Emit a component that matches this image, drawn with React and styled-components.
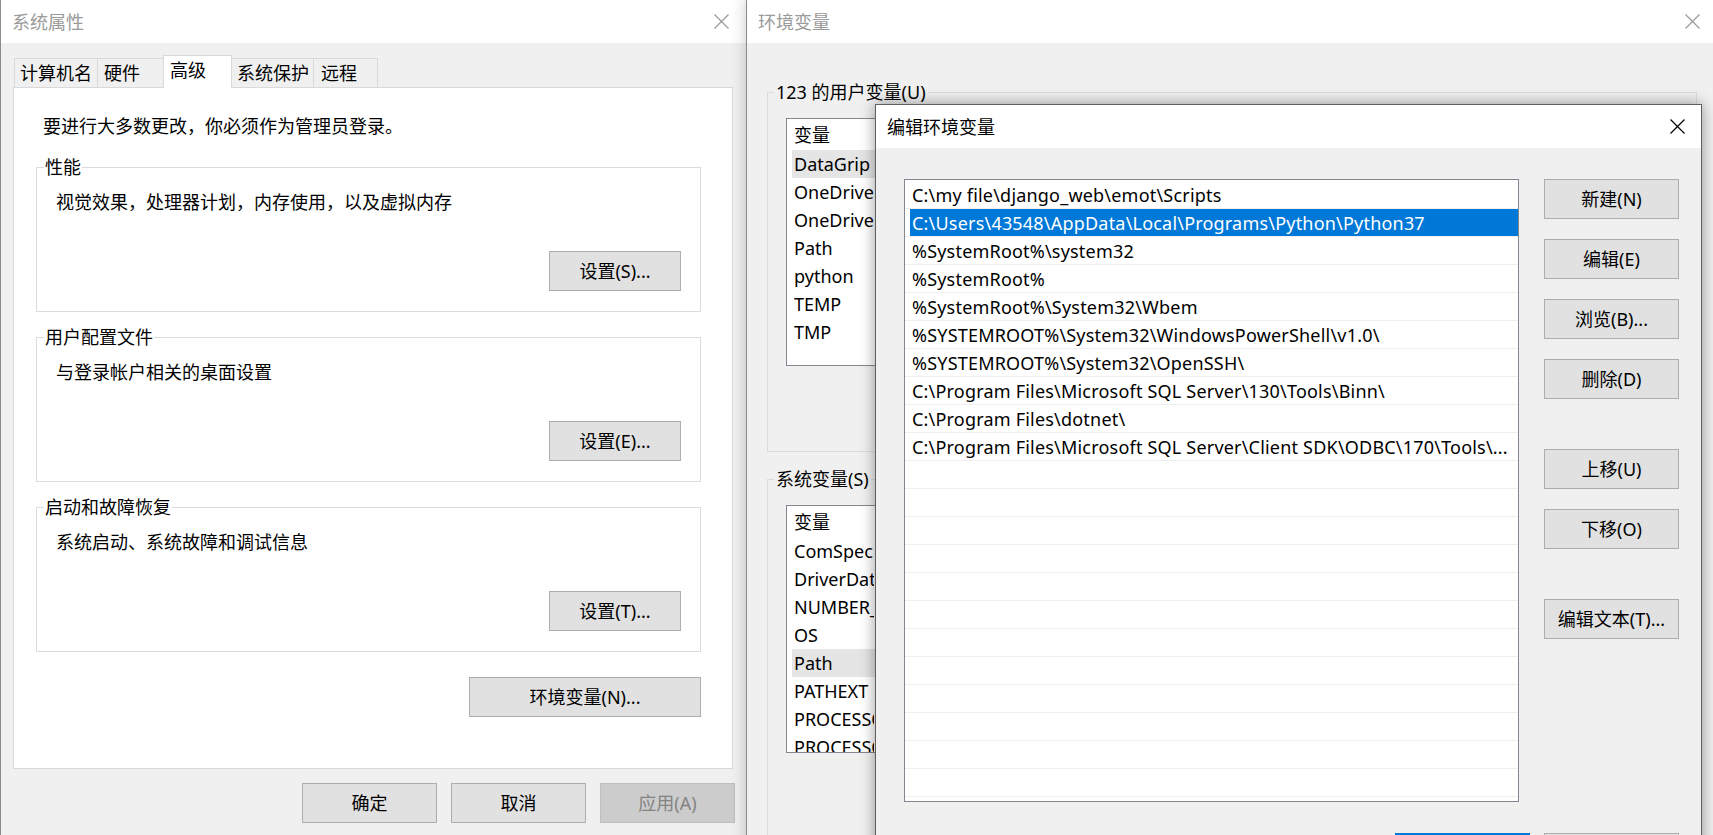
import React from "react";
import styled, { createGlobalStyle } from "styled-components";

const GlobalStyle = createGlobalStyle`
  html, body {
    margin: 0;
    padding: 0;
    background: #f0f0f0;
    overflow: hidden;
  }
  body {
    font-family: "Noto Sans", "Noto Sans CJK SC", sans-serif;
    font-size: 18px;
    line-height: 24px;
    color: #000;
  }
  * { box-sizing: border-box; }
`;

const Desktop = styled.div`
  position: relative;
  width: 1713px;
  height: 835px;
  overflow: hidden;
  background: #f0f0f0;
`;

// windows sit on a free canvas, so they get their place from props
const Window = styled.div`
  position: absolute;
  left: ${(p) => p.$left}px;
  top: ${(p) => p.$top}px;
  width: ${(p) => p.$width}px;
  height: ${(p) => p.$height}px;
  background: #f0f0f0;
  border: 1px solid ${(p) => (p.$active ? "#5f5f5f" : "#8c8c8c")};
  box-shadow: 0 0 14px rgba(0, 0, 0, ${(p) => (p.$active ? 0.4 : 0.22)});
  display: flex;
  flex-direction: column;
`;

const TitleBar = styled.div`
  height: 43px;
  flex-shrink: 0;
  background: #fff;
  display: flex;
  align-items: center;
  justify-content: space-between;
  padding: 0 ${(p) => p.$padRight || 17}px 0 11px;
  color: ${(p) => (p.$active ? "#000" : "#9a9a9a")};
`;

const CloseIcon = ({ color }) => (
  <svg width="15" height="15" viewBox="0 0 15 15">
    <path d="M0.5 0.5 L14.5 14.5 M14.5 0.5 L0.5 14.5" stroke={color} strokeWidth="1.2" fill="none" />
  </svg>
);

/* ---------- 系统属性 ---------- */

const PropsBody = styled.div`
  padding: 12px 13px 0 12px;
  display: flex;
  flex-direction: column;
`;

const TabRow = styled.div`
  height: 32px;
  margin-left: 1px;
  display: flex;
  align-items: flex-end;
`;

const Tab = styled.div`
  width: ${(p) => p.$w}px;
  height: ${(p) => (p.$active ? 33 : 29)}px;
  margin-bottom: ${(p) => (p.$active ? -1 : 0)}px;
  margin-left: ${(p) => (p.$first ? 0 : -1)}px;
  padding-left: ${(p) => p.$pl}px;
  border: 1px solid #d9d9d9;
  border-bottom: none;
  background: ${(p) => (p.$active ? "#fff" : "#f0f0f0")};
  position: relative;
  z-index: ${(p) => (p.$active ? 2 : 1)};
  display: flex;
  align-items: center;
  padding-bottom: ${(p) => (p.$active ? 4 : 0)}px;
`;

const Panel = styled.div`
  height: 682px;
  background: #fff;
  border: 1px solid #d9d9d9;
  padding: 26px 31px 0 22px;
  display: flex;
  flex-direction: column;
`;

const Intro = styled.div`
  padding-left: 7px;
`;

const Group = styled.fieldset`
  margin: ${(p) => p.$mt || 0}px 0 0 0;
  padding: 0 19px 20px 7px;
  border: 1px solid #dcdcdc;
  min-width: 0;
`;

const GroupTitle = styled.legend`
  padding: 0 1px;
  line-height: 24px;
`;

const GroupText = styled.div`
  margin: 11px 0 0 12px;
`;

const ButtonRow = styled.div`
  display: flex;
  justify-content: flex-end;
  gap: ${(p) => p.$gap || 0}px;
  margin-top: ${(p) => p.$mt || 0}px;
  margin-right: ${(p) => p.$mr || 0}px;
`;

const Button = styled.button`
  width: ${(p) => p.$w}px;
  height: 40px;
  flex-shrink: 0;
  margin-top: ${(p) => p.$mt || 0}px;
  padding: 0;
  font-family: inherit;
  font-size: 18px;
  line-height: 24px;
  background: ${(p) => (p.$off ? "#cccccc" : "#e1e1e1")};
  border: 1px solid ${(p) => (p.$primary ? "#0078d7" : p.$off ? "#bfbfbf" : "#adadad")};
  box-shadow: ${(p) => (p.$primary ? "inset 0 0 0 1px #0078d7" : "none")};
  color: ${(p) => (p.$off ? "#838383" : "#000")};
`;

/* ---------- 环境变量 ---------- */

const EnvBody = styled.div`
  padding: 37px 0 0 20px;
  display: flex;
  flex-direction: column;
`;

const EnvGroup = styled(Group)`
  width: 930px;
  height: ${(p) => p.$h}px;
  padding: 0 19px 0 6px;
`;

const EnvGroupTitle = styled(GroupTitle)`
  padding: 0 2px;
`;

const ListView = styled.div`
  height: 248px;
  margin: 14px 0 0 12px;
  border: 1px solid #828790;
  background: #fff;
  overflow: hidden;
`;

const ListHeader = styled.div`
  height: 31px;
  padding-left: 7px;
  display: flex;
  align-items: center;
`;

const ListRow = styled.div`
  height: 28px;
  margin-left: 5px;
  padding-left: 2px;
  display: flex;
  align-items: center;
  background: ${(p) => (p.$selected ? "#e5e5e5" : "transparent")};
`;

const NameCell = styled.div`
  width: 80px;
  white-space: nowrap;
  overflow: hidden;
`;

/* ---------- 编辑环境变量 ---------- */

const DialogBody = styled.div`
  padding: 31px 22px 0 28px;
  display: flex;
  flex-direction: column;
`;

const DialogMain = styled.div`
  display: flex;
  gap: 25px;
`;

const PathList = styled.div`
  width: 615px;
  height: 623px;
  padding-top: 1px;
  border: 1px solid #828790;
  background: #fff;
  overflow: hidden;
`;

const PathRow = styled.div`
  height: 28px;
  border-bottom: 1px solid #efefef;
  display: flex;
`;

const PathCell = styled.div`
  flex: 1;
  margin-left: 5px;
  padding: 0 8px 0 2px;
  display: flex;
  align-items: center;
  white-space: nowrap;
  overflow: hidden;
  letter-spacing: 0.2px;
  background: ${(p) => (p.$selected ? "#0078d7" : "transparent")};
  color: ${(p) => (p.$selected ? "#fff" : "#000")};
`;

const SideButtons = styled.div`
  display: flex;
  flex-direction: column;
`;

const userVars = ["DataGrip", "OneDrive", "OneDriveConsumer", "Path", "python", "TEMP", "TMP"];

const systemVars = [
  "ComSpec",
  "DriverData",
  "NUMBER_OF_PROCESSORS",
  "OS",
  "Path",
  "PATHEXT",
  "PROCESSOR_ARCHITECTURE",
  "PROCESSOR_IDENTIFIER",
];

const pathItems = [
  "C:\\my file\\django_web\\emot\\Scripts",
  "C:\\Users\\43548\\AppData\\Local\\Programs\\Python\\Python37",
  "%SystemRoot%\\system32",
  "%SystemRoot%",
  "%SystemRoot%\\System32\\Wbem",
  "%SYSTEMROOT%\\System32\\WindowsPowerShell\\v1.0\\",
  "%SYSTEMROOT%\\System32\\OpenSSH\\",
  "C:\\Program Files\\Microsoft SQL Server\\130\\Tools\\Binn\\",
  "C:\\Program Files\\dotnet\\",
  "C:\\Program Files\\Microsoft SQL Server\\Client SDK\\ODBC\\170\\Tools\\...",
];

const tabs = [
  { label: "计算机名", w: 84, pl: 5 },
  { label: "硬件", w: 67, pl: 6 },
  { label: "高级", w: 69, pl: 6, active: true },
  { label: "系统保护", w: 83, pl: 5 },
  { label: "远程", w: 65, pl: 7 },
];

const groups = [
  { title: "性能", text: "视觉效果，处理器计划，内存使用，以及虚拟内存", btn: "设置(S)..." },
  { title: "用户配置文件", text: "与登录帐户相关的桌面设置", btn: "设置(E)..." },
  { title: "启动和故障恢复", text: "系统启动、系统故障和调试信息", btn: "设置(T)..." },
];

const VarList = ({ names, selected }) => (
  <ListView>
    <ListHeader>
      <NameCell>变量</NameCell>
    </ListHeader>
    {names.map((n) => (
      <ListRow key={n} $selected={n === selected}>
        <NameCell>{n}</NameCell>
      </ListRow>
    ))}
  </ListView>
);

const SystemProperties = () => (
  <Window $left={0} $top={-1} $width={747} $height={900}>
    <TitleBar>
      <span>系统属性</span>
      <CloseIcon color="#9a9a9a" />
    </TitleBar>
    <PropsBody>
      <TabRow>
        {tabs.map((t, i) => (
          <Tab key={t.label} $w={t.w} $pl={t.pl} $active={t.active} $first={i === 0}>
            {t.label}
          </Tab>
        ))}
      </TabRow>
      <Panel>
        <Intro>要进行大多数更改，你必须作为管理员登录。</Intro>
        {groups.map((g, i) => (
          <Group key={g.title} $mt={i === 0 ? 17 : 13}>
            <GroupTitle>{g.title}</GroupTitle>
            <GroupText>{g.text}</GroupText>
            <ButtonRow $mt={37}>
              <Button $w={132}>{g.btn}</Button>
            </ButtonRow>
          </Group>
        ))}
        <ButtonRow $mt={25}>
          <Button $w={232}>环境变量(N)...</Button>
        </ButtonRow>
      </Panel>
      <ButtonRow $mt={14} $gap={14} $mr={-2}>
        <Button $w={135}>确定</Button>
        <Button $w={135}>取消</Button>
        <Button $w={135} $off>应用(A)</Button>
      </ButtonRow>
    </PropsBody>
  </Window>
);

const EnvironmentVariables = () => (
  <Window $left={746} $top={-1} $width={972} $height={900}>
    <TitleBar>
      <span>环境变量</span>
      <CloseIcon color="#9a9a9a" />
    </TitleBar>
    <EnvBody>
      <EnvGroup $h={372}>
        <EnvGroupTitle>123 的用户变量(U)</EnvGroupTitle>
        <VarList names={userVars} selected="DataGrip" />
      </EnvGroup>
      <EnvGroup $mt={15} $h={420}>
        <EnvGroupTitle>系统变量(S)</EnvGroupTitle>
        <VarList names={systemVars} selected="Path" />
      </EnvGroup>
    </EnvBody>
  </Window>
);

const EditDialog = () => {
  const rows = [...pathItems, ...Array(12).fill("")];
  return (
    <Window $left={875} $top={104} $width={827} $height={800} $active>
      <TitleBar $active $padRight={16}>
        <span>编辑环境变量</span>
        <CloseIcon color="#000" />
      </TitleBar>
      <DialogBody>
        <DialogMain>
          <PathList>
            {rows.map((text, i) => (
              <PathRow key={i}>
                <PathCell $selected={i === 1}>{text}</PathCell>
              </PathRow>
            ))}
          </PathList>
          <SideButtons>
            <Button $w={135}>新建(N)</Button>
            <Button $w={135} $mt={20}>编辑(E)</Button>
            <Button $w={135} $mt={20}>浏览(B)...</Button>
            <Button $w={135} $mt={20}>删除(D)</Button>
            <Button $w={135} $mt={50}>上移(U)</Button>
            <Button $w={135} $mt={20}>下移(O)</Button>
            <Button $w={135} $mt={50}>编辑文本(T)...</Button>
          </SideButtons>
        </DialogMain>
        <ButtonRow $mt={31} $gap={14}>
          <Button $w={135} $primary>确定</Button>
          <Button $w={135}>取消</Button>
        </ButtonRow>
      </DialogBody>
    </Window>
  );
};

const App = () => (
  <>
    <GlobalStyle />
    <Desktop>
      <SystemProperties />
      <EnvironmentVariables />
      <EditDialog />
    </Desktop>
  </>
);

export default App;
